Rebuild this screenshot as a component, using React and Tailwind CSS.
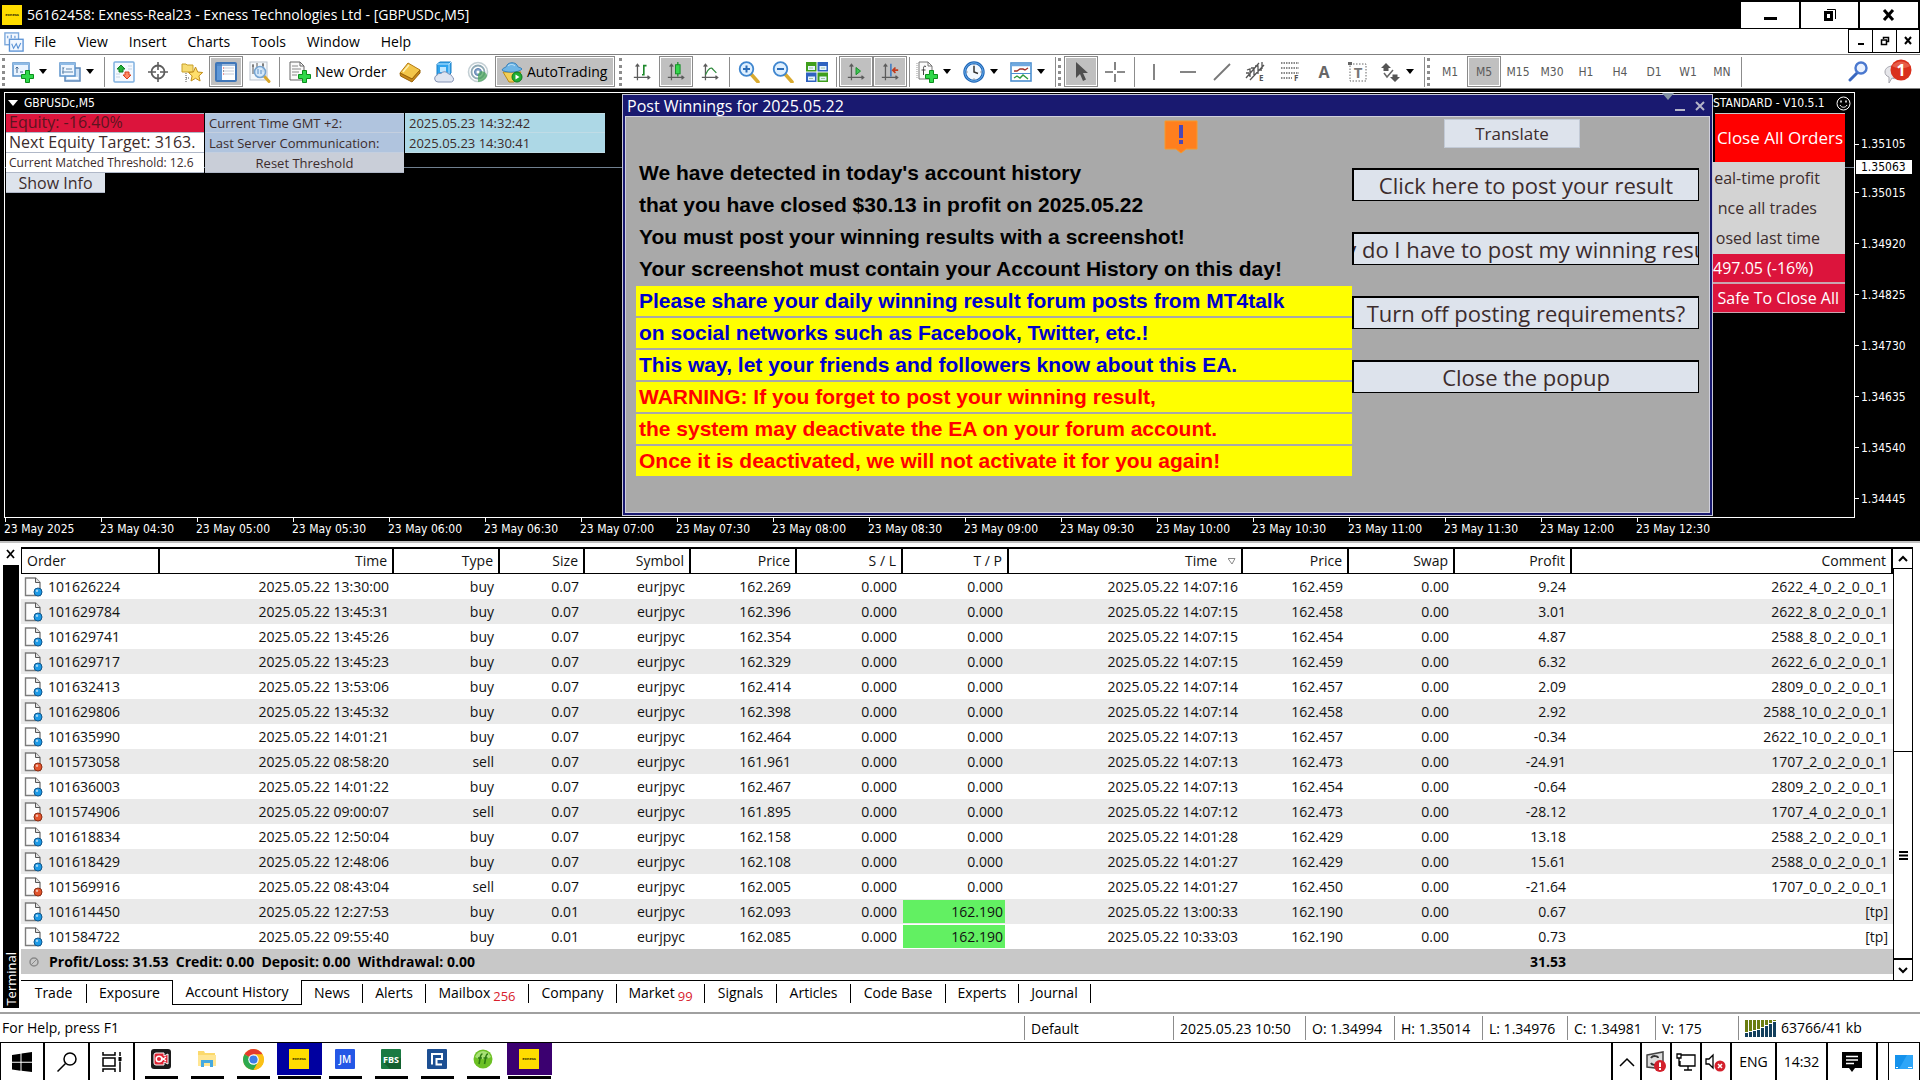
import React from 'react';

/* ---------- Data ---------- */

const MENUS = ['File', 'View', 'Insert', 'Charts', 'Tools', 'Window', 'Help'];

const TIMEFRAMES = ['M1', 'M5', 'M15', 'M30', 'H1', 'H4', 'D1', 'W1', 'MN'];

const TIMES = [
    '2025', '04:30', '05:00', '05:30', '06:00', '06:30', '07:00', '07:30', '08:00',
    '08:30', '09:00', '09:30', '10:00', '10:30', '11:00', '11:30', '12:00', '12:30',
];

const PRICES = ['1.35015', '1.34920', '1.34825', '1.34730', '1.34635', '1.34540', '1.34445'];

const COLUMNS = [
    { label: 'Order', width: 'w-[139px]' },
    { label: 'Time', width: 'w-[234px]' },
    { label: 'Type', width: 'w-[106px]' },
    { label: 'Size', width: 'w-[85px]' },
    { label: 'Symbol', width: 'w-[106px]' },
    { label: 'Price', width: 'w-[106px]' },
    { label: 'S / L', width: 'w-[106px]' },
    { label: 'T / P', width: 'w-[106px]' },
    { label: 'Time', width: 'w-[234px]', sorted: true },
    { label: 'Price', width: 'w-[106px]' },
    { label: 'Swap', width: 'w-[106px]' },
    { label: 'Profit', width: 'w-[117px]' },
    { label: 'Comment', width: '' },
];

// order, open time, type, size, open price, t/p, close time, close price, profit, comment
const ORDERS = [
    ['101626224', '13:30:00', 'buy', '0.07', '162.269', '0.000', '14:07:16', '162.459', '9.24', '2622_4_0_2_0_0_1'],
    ['101629784', '13:45:31', 'buy', '0.07', '162.396', '0.000', '14:07:15', '162.458', '3.01', '2622_8_0_2_0_0_1'],
    ['101629741', '13:45:26', 'buy', '0.07', '162.354', '0.000', '14:07:15', '162.454', '4.87', '2588_8_0_2_0_0_1'],
    ['101629717', '13:45:23', 'buy', '0.07', '162.329', '0.000', '14:07:15', '162.459', '6.32', '2622_6_0_2_0_0_1'],
    ['101632413', '13:53:06', 'buy', '0.07', '162.414', '0.000', '14:07:14', '162.457', '2.09', '2809_0_0_2_0_0_1'],
    ['101629806', '13:45:32', 'buy', '0.07', '162.398', '0.000', '14:07:14', '162.458', '2.92', '2588_10_0_2_0_0_1'],
    ['101635990', '14:01:21', 'buy', '0.07', '162.464', '0.000', '14:07:13', '162.457', '-0.34', '2622_10_0_2_0_0_1'],
    ['101573058', '08:58:20', 'sell', '0.07', '161.961', '0.000', '14:07:13', '162.473', '-24.91', '1707_2_0_2_0_0_1'],
    ['101636003', '14:01:22', 'buy', '0.07', '162.467', '0.000', '14:07:13', '162.454', '-0.64', '2809_2_0_2_0_0_1'],
    ['101574906', '09:00:07', 'sell', '0.07', '161.895', '0.000', '14:07:12', '162.473', '-28.12', '1707_4_0_2_0_0_1'],
    ['101618834', '12:50:04', 'buy', '0.07', '162.158', '0.000', '14:01:28', '162.429', '13.18', '2588_2_0_2_0_0_1'],
    ['101618429', '12:48:06', 'buy', '0.07', '162.108', '0.000', '14:01:27', '162.429', '15.61', '2588_0_0_2_0_0_1'],
    ['101569916', '08:43:04', 'sell', '0.07', '162.005', '0.000', '14:01:27', '162.450', '-21.64', '1707_0_0_2_0_0_1'],
    ['101614450', '12:27:53', 'buy', '0.01', '162.093', '162.190', '13:00:33', '162.190', '0.67', '[tp]'],
    ['101584722', '09:55:40', 'buy', '0.01', '162.085', '162.190', '10:33:03', '162.190', '0.73', '[tp]'],
];

const TABS = [
    { label: 'Trade', width: 'w-[66px]', sep: true },
    { label: 'Exposure', width: 'w-[85px]' },
    { label: 'Account History', width: 'w-[130px]', active: true },
    { label: 'News', width: 'w-[61px]', sep: true },
    { label: 'Alerts', width: 'w-[63px]', sep: true },
    { label: 'Mailbox', width: 'w-[103px]', sep: true, count: 256 },
    { label: 'Company', width: 'w-[88px]', sep: true },
    { label: 'Market', width: 'w-[88px]', sep: true, count: 99 },
    { label: 'Signals', width: 'w-[72px]', sep: true },
    { label: 'Articles', width: 'w-[74px]', sep: true },
    { label: 'Code Base', width: 'w-[95px]', sep: true },
    { label: 'Experts', width: 'w-[73px]', sep: true },
    { label: 'Journal', width: 'w-[72px]', sep: true },
];

const STATUS = [
    { text: 'Default', width: 'w-[149px]' },
    { text: '2025.05.23 10:50', width: 'w-[132px]' },
    { text: 'O: 1.34994', width: 'w-[89px]' },
    { text: 'H: 1.35014', width: 'w-[88px]' },
    { text: 'L: 1.34976', width: 'w-[85px]' },
    { text: 'C: 1.34981', width: 'w-[88px]' },
    { text: 'V: 175', width: 'w-[83px]' },
];

const POPUP_LINES = [
    ["We have detected in today's account history", 'text-black'],
    ['that you have closed $30.13 in profit on 2025.05.22', 'text-black'],
    ['You must post your winning results with a screenshot!', 'text-black'],
    ['Your screenshot must contain your Account History on this day!', 'text-black'],
    ['Please share your daily winning result forum posts from MT4talk', 'bg-[#ffff00] text-[#0000cd]'],
    ['on social networks such as Facebook, Twitter, etc.!', 'bg-[#ffff00] text-[#0000cd]'],
    ['This way, let your friends and followers know about this EA.', 'bg-[#ffff00] text-[#0000cd]'],
    ['WARNING: If you forget to post your winning result,', 'bg-[#ffff00] text-[#ff0000]'],
    ['the system may deactivate the EA on your forum account.', 'bg-[#ffff00] text-[#ff0000]'],
    ['Once it is deactivated, we will not activate it for you again!', 'bg-[#ffff00] text-[#ff0000]'],
];

const POPUP_BUTTONS = [
    'Click here to post your result',
    'Why do I have to post my winning results?',
    'Turn off posting requirements?',
    'Close the popup',
];

/* ---------- Icons ---------- */

function Icon({ children, size = 22 }) {
    return (
        <svg width={size} height={size} viewBox="0 0 22 22" fill="none" className="shrink-0">
            {children}
        </svg>
    );
}

const Plus = ({ x = 9, y = 9 }) => (
    <path
        transform={`translate(${x} ${y})`}
        d="M4.5.5h4v4h4v4h-4v4h-4v-4h-4v-4h4z"
        fill="#2fd84a"
        stroke="#0b8f1c"
    />
);

const Axes = () => (
    <path d="M6 3v17M2 17h17M4 5l2-2.500L8 5M17 15l2.500 2L17 19" stroke="#5c5c5c" strokeWidth="1.400" />
);

const NewChartIcon = () => (
    <Icon>
        <rect x="1" y="2" width="16" height="13" fill="#eaf4ff" stroke="#5b93cc" strokeWidth="1.500" />
        <path d="M1 3h16" stroke="#8fbbe6" strokeWidth="2" />
        <path d="M5 6v6M3.500 7.500 5 6l1.500 1.500M8 11h3" stroke="#44688f" />
        <Plus />
    </Icon>
);

const ProfilesIcon = () => (
    <Icon>
        <rect x="6" y="7" width="15" height="13" fill="#cfe2f6" stroke="#5b86b8" strokeWidth="1.500" />
        <path d="M8 17h11" stroke="#fff" strokeWidth="2" />
        <rect x="1" y="2" width="15" height="13" fill="#eef6ff" stroke="#5b93cc" strokeWidth="1.500" />
        <path d="M1 3h15" stroke="#8fbbe6" strokeWidth="2" />
        <path d="M4 6v7M3 11h11M7 8h6M4 8l1-1.500" stroke="#5f86ad" />
    </Icon>
);

const MarketWatchIcon = () => (
    <Icon>
        <rect x="1" y="1" width="20" height="20" rx="1" fill="#f4f9ff" stroke="#7fb0e0" strokeWidth="1.500" />
        <path d="M15 5h4M15 8h4M3 13h4M3 16h4" stroke="#c5d3e2" />
        <path d="m8 4 4 4h-2v3H6V8H4z" fill="#25b33a" stroke="#0f7d20" />
        <path d="m14 18 4-4h-2v-3h-4v3h-2z" fill="#ff8a66" stroke="#d8401c" />
    </Icon>
);

const CrosshairIcon = () => (
    <Icon>
        <circle cx="11" cy="11" r="6.500" stroke="#5d5d5d" strokeWidth="1.800" />
        <path d="M11 1v8M11 13v8M1 11h8M13 11h8" stroke="#5d5d5d" strokeWidth="1.600" />
    </Icon>
);

const NavigatorIcon = () => (
    <Icon>
        <path d="M1 3h4l1 1h6v7H1z" fill="#f7dc74" stroke="#c8a02a" />
        <path d="M5 12v9M5 17h4" stroke="#555" strokeDasharray="1 1" />
        <path d="m14.500 6 2.200 5 5 .5-3.800 3.400 1.200 5.100-4.600-2.700-4.500 2.700 1.100-5.100L7.500 11.500l4.900-.5z" fill="#ffdf6b" stroke="#c38f1c" />
    </Icon>
);

const TerminalIcon = () => (
    <Icon>
        <rect x="1" y="2" width="20" height="18" rx="1" fill="#fff" stroke="#3f76b8" strokeWidth="2" />
        <rect x="2" y="3" width="5" height="16" fill="#5f98d8" />
        <path d="M2 4h18" stroke="#3f76b8" />
        <path d="M9 7h10M9 10h10M9 13h10" stroke="#c4cbd6" />
        <path d="M8 7h1M8 13h1" stroke="#e03030" />
        <path d="M8 10h1" stroke="#333" />
    </Icon>
);

const TesterIcon = () => (
    <Icon>
        <rect x="1" y="1" width="17" height="18" fill="#f5f8fb" stroke="#b9c2cc" />
        <path d="M4 3v10M8 2v6M14 2v9M3 5h2M13 4h2" stroke="#555" />
        <path d="m15 15 5 5.500" stroke="#d8a62c" strokeWidth="3" strokeLinecap="round" />
        <circle cx="11" cy="11" r="5.500" fill="#cfe6fa" fillOpacity=".85" stroke="#77a5d2" strokeWidth="1.600" />
        <path d="M9 8v5M12 9v4" stroke="#5d8fc4" />
    </Icon>
);

const NewOrderIcon = () => (
    <Icon>
        <path d="M1 1h10l4 4v14H1z" fill="#fafafa" stroke="#666" />
        <path d="M11 1v4h4" stroke="#666" />
        <path d="M3 5h6M3 8h9M3 11h7M3 14h5" stroke="#8a8a8a" />
        <Plus />
    </Icon>
);

const BookIcon = () => (
    <Icon>
        <path d="M1 12 9 2l12 7-8 9z" fill="#f3c64a" stroke="#b47a12" />
        <path d="m1 12 .5 3L13 21l8-9V9l-8 9z" fill="#c8891a" stroke="#9a6408" />
        <path d="m4 11 6-7" stroke="#fff1b0" strokeWidth="1.500" />
    </Icon>
);

const CloudIcon = () => (
    <Icon>
        <path d="m4 3 3-2h11v11l-2 2H4z" fill="#2fa4ee" stroke="#1c7fc4" />
        <path d="M4 3h12v11M16 3l2-2" stroke="#bfe6ff" />
        <path d="M7 6h6v5H7z" fill="#bfe6ff" />
        <path d="M5 21a3.500 3.500 0 0 1-1-6.800A3.500 3.500 0 0 1 8 12.500a4.500 4.500 0 0 1 7.500.500 3.500 3.500 0 0 1 3.500 2.500A3 3 0 0 1 18.500 21z" fill="#dfe5f1" stroke="#8392b4" />
    </Icon>
);

const SignalIcon = () => (
    <Icon>
        <circle cx="11" cy="11" r="9.500" stroke="#c3cfd4" strokeWidth="1.600" />
        <circle cx="11" cy="11" r="6.500" stroke="#8fa9b4" strokeWidth="1.800" />
        <circle cx="11" cy="11" r="3.500" fill="#86a4c8" stroke="#5a7fb0" />
        <path d="M11 11c5-2 9 1 9 4-1 3-4 5.500-9 6z" fill="#4aa35a" fillOpacity=".75" />
        <circle cx="11" cy="11" r="1.500" fill="#fff" />
    </Icon>
);

const AutoTradingIcon = () => (
    <Icon>
        <path d="M2 11h18l-7 10H8z" fill="#f3cf55" stroke="#b88a18" />
        <path d="M1 9c1-3 5-2 5-5 2-3 8-3 10 0 0 3 4 2 5 4-3 4-17 4-20 1z" fill="#6fb6e6" stroke="#3881bb" />
        <path d="M7 5c2-2 5-2 7 0" stroke="#c9e8fa" />
        <circle cx="16" cy="16" r="5" fill="#1fae33" stroke="#0d7a1e" />
        <path d="m14.500 13.500 4 2.500-4 2.500z" fill="#fff" />
    </Icon>
);

const BarChartIcon = () => (
    <Icon size={20}>
        <Axes />
        <path d="M11 14h2V4h3M13 4v9" stroke="#1f8a2c" strokeWidth="1.800" />
    </Icon>
);

const CandleIcon = () => (
    <Icon size={20}>
        <Axes />
        <path d="M13 0v16" stroke="#1f8a2c" strokeWidth="1.400" />
        <rect x="10.500" y="3" width="5" height="10" fill="#35d64c" stroke="#128a24" />
    </Icon>
);

const LineChartIcon = () => (
    <Icon size={20}>
        <Axes />
        <path d="M6 14c3-7 7-9 8-6l4 4" stroke="#2f8a3c" strokeWidth="1.400" />
    </Icon>
);

function ZoomIcon({ plus }) {
    return (
        <Icon>
            <path d="m13 13 7 8" stroke="#d9aa2f" strokeWidth="3.500" strokeLinecap="round" />
            <circle cx="8.500" cy="8" r="6.800" fill="#dff0ff" stroke="#3f86cf" strokeWidth="1.800" />
            <path d={plus ? 'M5 8h7M8.500 4.500v7' : 'M5 8h7'} stroke="#2c6db8" strokeWidth="2" />
        </Icon>
    );
}

const TileIcon = () => (
    <Icon>
        <rect x="0" y="1" width="10.500" height="9.500" fill="#3f9e1c" />
        <rect x="11.500" y="1" width="10.500" height="9.500" fill="#2f62c0" />
        <rect x="0" y="11.500" width="10.500" height="9.500" fill="#2f62c0" />
        <rect x="11.500" y="11.500" width="10.500" height="9.500" fill="#3f9e1c" />
        <path d="M2 5h7v4H2zM13.500 5h7v4h-7zM2 15.500h7v4H2zM13.500 15.500h7v4h-7z" fill="#e6f3ff" />
        <path d="M3 7h4M15 7h4M3 17.500h4M15 17.500h4" stroke="#9fc3a0" />
    </Icon>
);

const AutoScrollIcon = () => (
    <Icon size={20}>
        <Axes />
        <path d="m11 6 5 4-5 4z" fill="#3fc452" stroke="#158a26" />
    </Icon>
);

const ShiftIcon = () => (
    <Icon size={20}>
        <Axes />
        <path d="M12 2v14" stroke="#2b6fc0" strokeWidth="1.500" />
        <path d="M20 9h-6M17 6l-3 3 3 3" stroke="#c23a1c" strokeWidth="1.800" />
    </Icon>
);

const IndicatorIcon = () => (
    <Icon>
        <path d="M3 1h9l4 4v13H3z" fill="#fafafa" stroke="#777" />
        <path d="M12 1v4h4" stroke="#777" />
        <path d="M1 2v16" stroke="#999" strokeDasharray="1 1" />
        <path d="M10 5.500c-2-1-2.500 0-2.500 2V14M5.500 9h4" stroke="#444" />
        <Plus />
    </Icon>
);

const ClockIcon = () => (
    <Icon>
        <circle cx="11" cy="11" r="9.200" fill="#f3f9ff" stroke="#1f66b8" strokeWidth="3" />
        <circle cx="11" cy="11" r="9.200" stroke="#69aeea" strokeWidth="1" />
        <path d="M11 5v6l4 1.500" stroke="#333" strokeWidth="1.500" />
        <path d="M11 3.500v1M11 17.500v1M3.500 11h1M17.500 11h1" stroke="#555" />
    </Icon>
);

const TemplateIcon = () => (
    <Icon>
        <rect x="1" y="2" width="20" height="18" fill="#fff" stroke="#4c8fd0" strokeWidth="1.600" />
        <path d="M1 4h20" stroke="#6fa9e0" strokeWidth="2.500" />
        <path d="M1 12.500h20" stroke="#4c8fd0" />
        <path d="M4 10h3l3-2h3l2 1 3-2" stroke="#a03028" strokeWidth="1.400" />
        <path d="m4 17 3-2 3 2 3-3 5 4" stroke="#2f9a3e" strokeWidth="1.400" />
    </Icon>
);

const CursorIcon = () => (
    <Icon>
        <path d="M6 1v16l4-4 3 7 3-1.500-3-6.500h5z" fill="#4f4f4f" />
    </Icon>
);

const CrossIcon = () => (
    <Icon>
        <path d="M11 1v8M11 13v8M1 11h8M13 11h8" stroke="#666" strokeWidth="1.600" />
    </Icon>
);

const VLineIcon = () => <Icon><path d="M11 3v16" stroke="#666" strokeWidth="1.600" /></Icon>;
const HLineIcon = () => <Icon><path d="M3 11h16" stroke="#666" strokeWidth="1.600" /></Icon>;
const TrendIcon = () => <Icon><path d="M3 19 19 3" stroke="#777" strokeWidth="1.800" /></Icon>;

const ChannelIcon = () => (
    <Icon>
        <path d="M1 17 14 2M5 19 19 4M2 9l3-1 0 8M6 7l3 0 0 8M10 5l3 0 0 8M17 1l0 7M1 12h3M13 9h4" stroke="#555" strokeWidth="1.300" />
        <text x="14" y="20" fontSize="8" fontWeight="700" fill="#555">E</text>
    </Icon>
);

const FiboIcon = () => (
    <Icon>
        <path d="M2 2h18M2 7h18M2 12h18M2 17h11" stroke="#666" strokeWidth="1.300" strokeDasharray="1.500 1" />
        <text x="15" y="20" fontSize="8" fontWeight="700" fill="#555">F</text>
    </Icon>
);

const TextIcon = () => (
    <Icon>
        <text x="11" y="17" fontSize="16" fontWeight="700" fill="#666" textAnchor="middle">A</text>
    </Icon>
);

const LabelIcon = () => (
    <Icon>
        <rect x="3" y="3" width="16" height="17" stroke="#666" strokeDasharray="1.500 1.500" />
        <path d="M1 1h4v3H1z" fill="#666" />
        <text x="11" y="17" fontSize="15" fontWeight="700" fill="#777" textAnchor="middle">T</text>
    </Icon>
);

const ArrowsIcon = () => (
    <Icon>
        <path d="M7 2 2 7l2.500 0v3h5V7H12zM16 21l5-5h-2.500v-2.500h-5V16H11z" fill="#555" />
        <path d="m5 12 3 4 6-7" stroke="#666" strokeWidth="1.500" />
    </Icon>
);

const MdiIcon = () => (
    <Icon size={20}>
        <rect x="1" y="1" width="15" height="13" fill="#f3f8ff" stroke="#7aa7db" strokeWidth="1.500" />
        <path d="M4 4v3M8 3v4M12 4v3" stroke="#7aa7db" strokeWidth="1.500" />
        <rect x="6" y="8" width="15" height="13" fill="#f3f8ff" stroke="#5d94d6" strokeWidth="1.500" />
        <path d="m8.500 13 2 5 3-5 2 5 3-6" stroke="#5d94d6" strokeWidth="1.200" />
    </Icon>
);

const ExnessTile = () => (
    <svg width="20" height="20" viewBox="0 0 20 20" className="shrink-0">
        <path d="M0 0h20v20H0z" fill="#ffdd00" />
        <text x="10" y="11" fontSize="4" fontWeight="700" textAnchor="middle" fill="#332b00">exness</text>
    </svg>
);

function DocIcon({ sell }) {
    return (
        <svg width="19" height="20" viewBox="0 0 19 20" fill="none" className="shrink-0">
            <path d="M1.500 1h10L16 5.500V18.500h-14.500z" fill="#fdfdfd" stroke="#7c7c7c" strokeWidth="1.400" />
            <path d="M11.500 1v4.500H16" fill="#e3e3e3" stroke="#555" />
            <circle cx="14" cy="15" r="4" fill={sell ? '#e2552d' : '#1d9ae6'} stroke={sell ? '#8d2c12' : '#0f568c'} />
            <circle cx="13" cy="13.700" r="1.200" fill="#fff" fillOpacity=".6" />
        </svg>
    );
}

/* ---------- Toolbar parts ---------- */

const Sep = () => <span className="w-px h-[30px] mx-[2px] bg-[#8c8c8c] shrink-0" />;

const Grip = () => (
    <span className="w-[6px] shrink-0 flex">
        <span className="w-[3px] h-[28px] border-l-[3px] border-dotted border-[#8c8c8c]" />
    </span>
);

function ToolButton({ label, active, children }) {
    return (
        <button
            aria-label={label}
            className={
                active
                    ? 'w-[34px] h-[31px] shrink-0 flex items-center justify-center bg-[#c0c0c0] border border-[#8a8a8a] outline outline-1 -outline-offset-2 outline-white'
                    : 'w-[34px] h-[31px] shrink-0 flex items-center justify-center'
            }
        >
            {children}
        </button>
    );
}

function DropButton({ label, children }) {
    return (
        <button aria-label={label} className="w-[47px] h-[31px] shrink-0 flex items-center pl-1">
            {children}
            <svg width="8" height="5" viewBox="0 0 8 5" className="ml-[5px]"><path d="M0 0h8L4 5z" fill="#000" /></svg>
        </button>
    );
}

function Toolbar() {
    return (
        <div className="h-[34px] shrink-0 flex items-center pl-[2px] bg-white border-b border-[#808080] overflow-hidden">
            <Grip />
            <DropButton label="New chart"><NewChartIcon /></DropButton>
            <DropButton label="Profiles"><ProfilesIcon /></DropButton>
            <Sep />
            <ToolButton label="Market watch"><MarketWatchIcon /></ToolButton>
            <ToolButton label="Data window"><CrosshairIcon /></ToolButton>
            <ToolButton label="Navigator"><NavigatorIcon /></ToolButton>
            <ToolButton label="Terminal" active><TerminalIcon /></ToolButton>
            <ToolButton label="Strategy tester"><TesterIcon /></ToolButton>
            <Sep />
            <button className="w-[111px] shrink-0 flex items-center gap-1 pl-[7px] text-[14px] whitespace-nowrap">
                <NewOrderIcon />
                New Order
            </button>
            <ToolButton label="MetaEditor"><BookIcon /></ToolButton>
            <ToolButton label="Hosting"><CloudIcon /></ToolButton>
            <ToolButton label="Signals"><SignalIcon /></ToolButton>
            <button className="w-[120px] h-[31px] mr-1 shrink-0 flex items-center gap-1 pl-[5px] text-[14px] whitespace-nowrap bg-[#c0c0c0] border border-[#8a8a8a] outline outline-1 -outline-offset-2 outline-white">
                <AutoTradingIcon />
                AutoTrading
            </button>
            <Grip />
            <ToolButton label="Bar chart"><BarChartIcon /></ToolButton>
            <ToolButton label="Candlesticks" active><CandleIcon /></ToolButton>
            <ToolButton label="Line chart"><LineChartIcon /></ToolButton>
            <Sep />
            <ToolButton label="Zoom in"><ZoomIcon plus /></ToolButton>
            <ToolButton label="Zoom out"><ZoomIcon /></ToolButton>
            <ToolButton label="Tile windows"><TileIcon /></ToolButton>
            <Sep />
            <ToolButton label="Auto scroll" active><AutoScrollIcon /></ToolButton>
            <ToolButton label="Chart shift" active><ShiftIcon /></ToolButton>
            <Sep />
            <DropButton label="Indicators"><IndicatorIcon /></DropButton>
            <DropButton label="Periods"><ClockIcon /></DropButton>
            <DropButton label="Templates"><TemplateIcon /></DropButton>
            <Sep />
            <Grip />
            <ToolButton label="Cursor" active><CursorIcon /></ToolButton>
            <ToolButton label="Crosshair"><CrossIcon /></ToolButton>
            <Sep />
            <ToolButton label="Vertical line"><VLineIcon /></ToolButton>
            <ToolButton label="Horizontal line"><HLineIcon /></ToolButton>
            <ToolButton label="Trendline"><TrendIcon /></ToolButton>
            <ToolButton label="Channel"><ChannelIcon /></ToolButton>
            <ToolButton label="Fibonacci"><FiboIcon /></ToolButton>
            <ToolButton label="Text"><TextIcon /></ToolButton>
            <ToolButton label="Text label"><LabelIcon /></ToolButton>
            <DropButton label="Arrows"><ArrowsIcon /></DropButton>
            <Sep />
            <Grip />
            {TIMEFRAMES.map((tf) => (
                <ToolButton key={tf} label={tf} active={tf === 'M5'}>
                    <span className="font-['DejaVu_Sans_Condensed','DejaVu_Sans',sans-serif] text-[12px] text-[#5a5a5a]">{tf}</span>
                </ToolButton>
            ))}
            <Sep />
            <div className="ml-auto flex items-center gap-3 pr-2">
                <button aria-label="Search">
                    <Icon>
                        <path d="m9 12-7 7" stroke="#3a68c0" strokeWidth="3" strokeLinecap="round" />
                        <circle cx="13" cy="7" r="5.500" fill="#eaf2ff" stroke="#4a78cf" strokeWidth="2.400" />
                    </Icon>
                </button>
                <button aria-label="Notifications">
                    <svg width="30" height="28" viewBox="0 0 30 28" fill="none">
                        <path d="M3 14c0-8 15-8 16 0s-7 7-9 6l-3 5 0-6c-3-1-4-3-4-5z" fill="#e6e6ea" stroke="#a5a5ad" />
                        <circle cx="19" cy="12" r="10.500" fill="#d9301c" />
                        <path d="M10 8c4-6 14-6 18 0-5 3-13 3-18 0z" fill="#f07a66" fillOpacity=".6" />
                        <text x="19" y="18" fontSize="16" fontWeight="700" fill="#fff" textAnchor="middle">1</text>
                    </svg>
                </button>
            </div>
        </div>
    );
}

/* ---------- Title and menu ---------- */

function TitleBar() {
    return (
        <header className="h-[29px] shrink-0 flex items-center bg-black text-white pl-[2px] pr-[2px]">
            <ExnessTile />
            <h1 className="ml-[5px] text-[14px] whitespace-nowrap">56162458: Exness-Real23 - Exness Technologies Ltd - [GBPUSDc,M5]</h1>
            <div className="ml-auto flex gap-[2px]">
                <button aria-label="Minimize" className="w-[58px] h-[26px] bg-white flex items-center justify-center">
                    <svg width="14" height="14"><path d="M1 9h13v3H1z" /></svg>
                </button>
                <button aria-label="Restore" className="w-[57px] h-[26px] bg-white flex items-center justify-center">
                    <svg width="14" height="14" fill="none"><path d="M2.500 4.500h6v7h-6z" stroke="#000" strokeWidth="3" /><path d="M4 1.500h8.500V11" stroke="#000" /></svg>
                </button>
                <button aria-label="Close" className="w-[58px] h-[26px] bg-white flex items-center justify-center">
                    <svg width="14" height="14"><path d="m2 2 9 10M11 2 2 12" stroke="#000" strokeWidth="3" /></svg>
                </button>
            </div>
        </header>
    );
}

function MenuBar() {
    return (
        <nav className="h-[26px] shrink-0 flex items-start bg-white border-b border-[#808080] pl-1">
            <span className="mt-[3px]"><MdiIcon /></span>
            <div className="flex items-center h-[24px] ml-[10px] gap-[21px] text-[14px]">
                {MENUS.map((m) => <button key={m}>{m}</button>)}
            </div>
            <div className="ml-auto flex">
                <button aria-label="Minimize chart" className="w-6 h-[24px] border border-black border-r-0 flex items-center justify-center">
                    <svg width="10" height="10"><path d="M2 7h6v2H2z" /></svg>
                </button>
                <button aria-label="Restore chart" className="w-6 h-[24px] border border-black border-r-0 flex items-center justify-center">
                    <svg width="10" height="10" fill="none"><path d="M3.500 3V1.500h5v4H7M1.500 4h5v4.500h-5z" stroke="#000" strokeWidth="1.500" /></svg>
                </button>
                <button aria-label="Close chart" className="w-6 h-[24px] border border-black flex items-center justify-center">
                    <svg width="10" height="10"><path d="m2 1 6 7M8 1 2 8" stroke="#000" strokeWidth="2" /></svg>
                </button>
            </div>
        </nav>
    );
}

/* ---------- Chart ---------- */

function EquityPanel() {
    return (
        <div className="relative w-[602px] pl-px text-[#3c2c2c] whitespace-nowrap">
            <div className="grid grid-cols-[198px_199px_200px] gap-x-px text-[13px] leading-[20px]">
                <div className="h-[20px] pl-[3px] leading-[16px] bg-[#dc143c] border-y border-[#b0b8c8] text-[16px] text-[#5c1420]">Equity: -16.40%</div>
                <div className="h-[20px] pl-1 leading-[19px] bg-[#b0c4de] border-y border-[#c4cfdf]">Current Time GMT +2:</div>
                <div className="h-[20px] pl-1 leading-[19px] bg-[#add8e6] border-y border-[#c0dce6]">2025.05.23 14:32:42</div>
                <div className="h-[20px] pl-[3px] leading-[18px] bg-white border-b border-[#b0b8c8] text-[16px]">Next Equity Target: 3163.</div>
                <div className="h-[20px] pl-1 bg-[#b0c4de] border-b border-[#c4cfdf]">Last Server Communication:</div>
                <div className="h-[20px] pl-1 bg-[#add8e6] border-b border-[#c0dce6]">2025.05.23 14:30:41</div>
                <div className="h-[20px] pl-[3px] bg-white border-b border-[#b0b8c8] text-[12px]">Current Matched Threshold: 12.6</div>
                <button className="h-[20px] bg-[#c9ced8] border-b border-[#b0b8c8]">Reset Threshold</button>
            </div>
            <button className="w-[99px] h-[20px] bg-[#dde3ec] border-b border-[#b0b8c8] text-[16px] leading-[18px]">Show Info</button>
        </div>
    );
}

function ClosePanel() {
    return (
        <div className="relative w-[141px] shrink-0 flex flex-col text-[17px] whitespace-nowrap text-[#3c2c2c]">
            <div className="h-[20px] flex items-center justify-between pr-[3px] text-white font-['DejaVu_Sans_Condensed','DejaVu_Sans',sans-serif] text-[12px]">
                STANDARD - V10.5.1
                <svg width="15" height="15" viewBox="0 0 15 15" fill="none" stroke="#fff">
                    <circle cx="7.500" cy="7.500" r="6.500" />
                    <path d="M4 9c1.500 3 5.500 3 7 0" />
                    <path d="M5 4.500v2M10 4.500v2" strokeWidth="1.500" />
                </svg>
            </div>
            <div className="w-[132px] pl-[2px]">
                <button className="w-full h-[49px] bg-[#ff0000] text-white border-t border-[#c8c8c8]">Close All Orders</button>
            </div>
            <div className="w-[132px] bg-[#d3d3d3] pt-px pb-px leading-[30px] text-right text-[16px]">
                <p className="pr-[25px]">eal-time profit</p>
                <p className="pr-[28px]">nce all trades</p>
                <p className="pr-[25px]">osed last time</p>
            </div>
            <div className="w-[132px] h-[30px] leading-[28px] pr-[32px] text-right text-[16px] bg-[#dc143c] text-white border-b-2 border-[#c9a5b0]">497.05 (-16%)</div>
            <button className="w-[132px] h-[29px] pr-[6px] text-right text-[16px] bg-[#dc143c] text-white border-b border-[#c9a5b0]">Safe To Close All</button>
        </div>
    );
}

function Popup() {
    return (
        <div className="absolute left-[617px] right-[141px] top-px bottom-px flex flex-col border border-[#c8c8d8] bg-[#191970] pt-px px-[2px] pb-[2px]">
            <div className="h-[20px] shrink-0 flex items-center pl-[2px] pr-[5px] text-white text-[16px]">
                <span className="leading-[20px]">Post Winnings for 2025.05.22</span>
                <button aria-label="Collapse popup" className="ml-auto mr-[10px]">
                    <svg width="10" height="10"><path d="M0 8h10v2H0z" fill="#b4b4c8" /></svg>
                </button>
                <button aria-label="Dismiss popup">
                    <svg width="10" height="10"><path d="m1 1 8 8M9 1 1 9" stroke="#b4b4c8" strokeWidth="2" /></svg>
                </button>
            </div>
            <div className="flex-1 flex bg-[#a9a9a9] border border-[#d0d0dc] pl-[10px] pr-[10px]">
                <div className="flex-1 min-w-0">
                    <div className="h-[41px] flex justify-end pt-[3px] pr-[154px]">
                        <svg width="34" height="34" viewBox="0 0 34 34">
                            <path d="M1 1h32v28H22l-5 4-5-4H1z" fill="#ff7f1e" stroke="#f79a2a" />
                            <path d="M15 5h4v13h-4zM15 20h4v4h-4z" fill="#4a48b8" />
                        </svg>
                    </div>
                    <div className="flex flex-col gap-[2px]">
                        {POPUP_LINES.map(([text, tone]) => (
                            <p
                                key={text}
                                className={`h-[30px] pl-[3px] font-['Liberation_Sans',Arial,sans-serif] font-bold text-[21px] leading-[30px] whitespace-nowrap ${tone}`}
                            >
                                {text}
                            </p>
                        ))}
                    </div>
                </div>
                <div className="w-[347px] shrink-0 flex flex-col pt-[2px] text-[#3c2c2c]">
                    <button className="ml-[92px] mb-5 w-[136px] h-[29px] bg-[#dde3ec] border border-[#c2cad6] text-[17px] leading-[26px]">Translate</button>
                    <div className="flex flex-col gap-[31px]">
                        {POPUP_BUTTONS.map((b) => (
                            <button
                                key={b}
                                className="h-[33px] flex items-center justify-center overflow-hidden whitespace-nowrap bg-[#dde3ec] border border-t-2 border-l-2 border-black text-[22px] leading-[30px]"
                            >
                                {b}
                            </button>
                        ))}
                    </div>
                </div>
            </div>
        </div>
    );
}

function PriceAxis() {
    return (
        <div className="relative w-[63px] shrink-0 pt-[29px] text-white">
            <p className="h-[46px] flex items-center gap-[2px]"><span className="w-1 h-px bg-white" />1.35105</p>
            {PRICES.map((p) => (
                <p key={p} className="h-[51px] flex items-center gap-[2px]"><span className="w-1 h-px bg-white" />{p}</p>
            ))}
            <span className="absolute left-px top-[68px] w-[56px] h-[14px] pl-[5px] leading-[14px] bg-white text-black">1.35063</span>
        </div>
    );
}

function Chart() {
    return (
        <section className="h-[454px] shrink-0 flex flex-col bg-black border-b-2 border-[#c0c0c0] pl-1 pt-[3px] pr-[2px] font-['DejaVu_Sans_Condensed','DejaVu_Sans',sans-serif] text-[12px]">
            <div className="flex-1 min-h-0 flex">
                <div className="relative flex-1 flex justify-between border border-white font-['Open_Sans','Noto_Sans',sans-serif]">
                    <span className="absolute left-0 right-0 top-[74px] h-px bg-[#708090]" />
                    <div>
                        <div className="h-[20px] flex items-center gap-[6px] pl-[3px] text-white font-['DejaVu_Sans_Condensed','DejaVu_Sans',sans-serif] text-[12px]">
                            <svg width="10" height="6"><path d="M0 0h10L5 6z" fill="#fff" /></svg>
                            GBPUSDc,M5
                        </div>
                        <EquityPanel />
                    </div>
                    <ClosePanel />
                    <Popup />
                    <svg width="12" height="7" className="absolute right-[180px] top-0"><path d="M0 0h12L6 7z" fill="#8494a4" /></svg>
                </div>
                <PriceAxis />
            </div>
            <div className="h-[23px] shrink-0 flex text-white overflow-hidden">
                {TIMES.map((t) => (
                    <div key={t} className="w-[96px] shrink-0">
                        <span className="block ml-px w-px h-[4px] bg-white" />
                        <p className="leading-[14px] whitespace-nowrap">23 May {t}</p>
                    </div>
                ))}
            </div>
        </section>
    );
}

/* ---------- Terminal ---------- */

function HistoryTable() {
    return (
        <table className="w-full table-fixed border-separate border-spacing-0 text-[14px] leading-[25px] text-right text-[#111]">
            <colgroup>
                {COLUMNS.map((c, i) => <col key={i} className={c.width} />)}
            </colgroup>
            <thead>
                <tr>
                    {COLUMNS.map((c, i) => (
                        <th
                            key={i}
                            scope="col"
                            className={`h-[27px] p-0 leading-[24px] font-normal border-t-2 border-b border-r-2 border-black ${i === 0 ? 'pl-[5px] text-left border-l' : 'pr-[5px]'}`}
                        >
                            {c.label}
                            {c.sorted && (
                                <svg width="8" height="7" viewBox="0 0 8 7" fill="none" className="inline-block ml-[11px] mb-[2px]">
                                    <path d="M0 .5h7L4 6z" stroke="#8a8a8a" />
                                </svg>
                            )}
                        </th>
                    ))}
                </tr>
            </thead>
            <tbody>
                {ORDERS.map(([id, opened, type, size, price, tp, closed, closePrice, profit, comment], i) => (
                    <tr key={id} className={i % 2 ? 'h-[25px] bg-[#eaeaea]' : 'h-[25px] bg-white'}>
                        <td className="p-0 pl-[3px]">
                            <span className="flex items-center gap-[5px] h-[25px]"><DocIcon sell={type === 'sell'} />{id}</span>
                        </td>
                        <td className="p-0 pr-[5px]">2025.05.22 {opened}</td>
                        <td className="p-0 pr-[6px]">{type}</td>
                        <td className="p-0 pr-[6px]">{size}</td>
                        <td className="p-0 pr-[6px]">eurjpyc</td>
                        <td className="p-0 pr-[6px]">{price}</td>
                        <td className="p-0 pr-[6px]">0.000</td>
                        <td className="p-0 pr-1">
                            <span className={tp === '0.000' ? 'block pr-[2px]' : 'block h-[23px] leading-[23px] pr-[2px] bg-[#62f062]'}>{tp}</span>
                        </td>
                        <td className="p-0 pr-[5px]">2025.05.22 {closed}</td>
                        <td className="p-0 pr-[6px]">{closePrice}</td>
                        <td className="p-0 pr-[6px]">0.00</td>
                        <td className="p-0 pr-[6px]">{profit}</td>
                        <td className="p-0 pr-[5px]">{comment}</td>
                    </tr>
                ))}
                <tr className="h-[25px] bg-[#c8c8c8] font-bold text-black">
                    <td colSpan={11} className="p-0 pl-[8px]">
                        <span className="flex items-center h-[25px] gap-[10px] whitespace-pre">
                            <svg width="10" height="10" viewBox="0 0 10 10" fill="none" stroke="#8a8a8a"><circle cx="5" cy="5" r="4" strokeWidth="1.500" /><path d="m2 8 6-6" /></svg>
                            {'Profit/Loss: 31.53  Credit: 0.00  Deposit: 0.00  Withdrawal: 0.00'}
                        </span>
                    </td>
                    <td className="p-0 pr-[6px]">31.53</td>
                    <td />
                </tr>
            </tbody>
        </table>
    );
}

function ScrollBar() {
    return (
        <div className="w-5 shrink-0 flex flex-col border-t-2 border-r border-black">
            <button aria-label="Scroll up" className="h-[20px] flex items-center justify-center border-b border-black">
                <svg width="10" height="7" fill="none"><path d="m1 6 4-4 4 4" stroke="#000" strokeWidth="2" /></svg>
            </button>
            <div className="h-[182px] border-l border-black" />
            <div className="flex-1 border-y border-l border-black flex items-center justify-center">
                <svg width="9" height="9"><path d="M0 0h9v2H0zM0 3.500h9v2H0zM0 7h9v2H0z" /></svg>
            </div>
            <button aria-label="Scroll down" className="h-[21px] flex items-center justify-center border-t border-l border-black">
                <svg width="10" height="7" fill="none"><path d="m1 1 4 4 4-4" stroke="#000" strokeWidth="2" /></svg>
            </button>
        </div>
    );
}

function Tabs() {
    return (
        <div className="h-[32px] flex items-start text-[14px] leading-[20px]">
            {TABS.map((t) => (
                <button
                    key={t.label}
                    className={`${t.width} h-[25px] shrink-0 flex items-center whitespace-nowrap border-black ${t.active ? 'border-x border-b' : 'border-t'}`}
                >
                    <span className="flex-1 text-center">
                        {t.label}
                        {t.count && <sub className="ml-[3px] text-[13px] text-[#d8202c] leading-none">{t.count}</sub>}
                    </span>
                    {t.sep && <span className="w-px h-[19px] bg-black" />}
                </button>
            ))}
            <span className="flex-1 border-t border-black mr-[7px]" />
        </div>
    );
}

function Terminal() {
    return (
        <section className="flex bg-white border-b-2 border-[#a0a0a0]">
            <div className="w-[21px] shrink-0 flex flex-col pl-[3px] pr-[2px] pb-1">
                <button aria-label="Close terminal" className="h-[22px] flex items-center justify-center">
                    <svg width="10" height="10"><path d="m1 1 7 8M8 1 1 9" stroke="#000" strokeWidth="1.800" /></svg>
                </button>
                <div className="flex-1 bg-black text-white flex items-end justify-center pb-[2px]">
                    <span className="[writing-mode:vertical-rl] rotate-180 text-[13px] leading-[16px]">Terminal</span>
                </div>
            </div>
            <div className="flex-1 min-w-0 flex flex-col pt-1">
                <div className="flex pr-[7px]">
                    <div className="flex-1 min-w-0 pb-[6px]"><HistoryTable /></div>
                    <ScrollBar />
                </div>
                <Tabs />
            </div>
        </section>
    );
}

/* ---------- Status bar and taskbar ---------- */

const TRAFFIC = [4, 5, 6, 7, 9, 11, 13, 15];

function StatusBar() {
    return (
        <footer className="h-[29px] shrink-0 flex items-center bg-white border-b border-black text-[14px] leading-[26px] whitespace-nowrap">
            <span className="flex-1 pl-[2px]">For Help, press F1</span>
            {STATUS.map((s) => (
                <span key={s.text} className={`${s.width} shrink-0 h-[24px] pl-[6px] border-l border-[#8c8c8c]`}>{s.text}</span>
            ))}
            <span className="w-[182px] shrink-0 h-[24px] flex items-center gap-[5px] pl-[6px] border-l border-[#8c8c8c]">
                <svg width="31" height="17">
                    {TRAFFIC.map((h, i) => (
                        <g key={i}>
                            <rect x={i * 4} y="0" width="3" height={16 - h} fill="#6b7d10" />
                            <rect x={i * 4} y={17 - h} width="3" height={h} fill="#123f5c" />
                        </g>
                    ))}
                </svg>
                63766/41 kb
            </span>
        </footer>
    );
}

const APPS = [
    {
        name: 'Recorder',
        icon: (
            <svg width="20" height="20" viewBox="0 0 20 20" fill="none">
                <rect width="20" height="20" rx="3" fill="#1b1b1b" />
                <path d="M5 4h8v3l4-2v10l-4-2v3H5a2 2 0 0 1-2-2V6a2 2 0 0 1 2-2z" fill="#e02434" stroke="#fff" />
                <circle cx="8" cy="10" r="2.800" stroke="#fff" strokeWidth="1.500" />
                <path d="m10 8 5 4M10 12l5-4" stroke="#fff" strokeWidth="1.300" />
            </svg>
        ),
    },
    {
        name: 'Explorer',
        icon: (
            <svg width="20" height="20" viewBox="0 0 20 20" fill="none">
                <path d="M1 2h6l1 2h10v13H1z" fill="#fbd96c" />
                <path d="M1 6h18v11H1z" fill="#ffe694" />
                <path d="M4 18v-7h12v7h-3v-4H7v4z" fill="#45a9e0" />
            </svg>
        ),
    },
    {
        name: 'Chrome',
        icon: (
            <svg width="21" height="21" viewBox="0 0 20 20">
                <circle cx="10" cy="10" r="10" fill="#fbc116" />
                <path d="M10 10 1.340 5A10 10 0 0 1 18.660 5z" fill="#e33b2e" />
                <path d="M10 10 1.340 5A10 10 0 0 0 10 20l4-7z" fill="#2da94f" />
                <path d="M10 5h8.660A10 10 0 0 1 10 20l4.300-7.500z" fill="#fbc116" />
                <circle cx="10" cy="10" r="5" fill="#fff" />
                <circle cx="10" cy="10" r="3.900" fill="#3f7ee8" />
            </svg>
        ),
    },
    { name: 'Exness', icon: <ExnessTile />, tone: 'bg-[#0000a0]' },
    {
        name: 'JM',
        icon: (
            <svg width="20" height="20" viewBox="0 0 20 20">
                <rect width="20" height="20" rx="1" fill="#2457e6" />
                <text x="10" y="14" fontSize="10" fontWeight="600" textAnchor="middle" fill="#fff">JM</text>
            </svg>
        ),
    },
    {
        name: 'FBS',
        icon: (
            <svg width="20" height="20" viewBox="0 0 20 20">
                <rect width="20" height="20" rx="1" fill="#1a7a43" />
                <path d="M3 14 9 20h11V9z" fill="#12602f" />
                <text x="10" y="14" fontSize="9" fontWeight="700" textAnchor="middle" fill="#fff">FBS</text>
            </svg>
        ),
    },
    {
        name: 'Platform',
        icon: (
            <svg width="20" height="20" viewBox="0 0 20 20" fill="none">
                <rect width="20" height="20" rx="1" fill="#1c4f93" />
                <path d="M5 15.500V5h10v5H9.500v5.500H15" stroke="#fff" strokeWidth="2" />
            </svg>
        ),
    },
    {
        name: 'Forex',
        icon: (
            <svg width="20" height="20" viewBox="0 0 20 20" fill="none">
                <circle cx="10" cy="10" r="9.500" fill="#6cc024" />
                <path d="M2 8c3-8 13-8 16 0-5 3-11 3-16 0z" fill="#b6e88a" fillOpacity=".8" />
                <path d="M9.500 5c-3 0-2 5-3.500 10M15 5c-3 0-2 5-3.500 10M5 9h4M10.500 9h4" stroke="#2c7a10" strokeWidth="1.600" />
            </svg>
        ),
    },
    { name: 'Exness 2', icon: <ExnessTile />, tone: 'bg-[#3b0070]' },
];

function Taskbar() {
    const cell = 'h-full shrink-0 flex items-center justify-center border-r-2 border-black';
    return (
        <div className="h-[37px] shrink-0 flex bg-white text-[14px]">
            <button aria-label="Start" className={`${cell} w-[45px] border-l`}>
                <svg width="20" height="20"><path d="M0 3l8.500-1.300v8H0zM9.500 1.500 20 0v9.700H9.500zM0 10.700h8.500v8L0 17.400zM9.500 10.700H20V20L9.500 18.700z" /></svg>
            </button>
            <button aria-label="Search" className={`${cell} w-[45px]`}>
                <svg width="20" height="20" fill="none" stroke="#000" strokeWidth="1.500"><circle cx="13" cy="7" r="6" /><path d="m8.500 11.500-8 8" /></svg>
            </button>
            <button aria-label="Task view" className={`${cell} w-[45px]`}>
                <svg width="20" height="20" fill="none" stroke="#000" strokeWidth="1.500"><path d="M1 0v3h12V0M1 20v-3h12v3M1 6h12v8H1zM18 0v4M18 9.500V20" /><path d="M18 5v4" strokeWidth="3" /></svg>
            </button>
            <div className="flex ml-[3px]">
                {APPS.map((a) => (
                    <button key={a.name} aria-label={a.name} className="w-[46px] h-full flex flex-col items-center">
                        <span className={`${a.tone ? `w-[45px] ${a.tone}` : 'w-[33px]'} h-[32px] flex items-center justify-center`}>{a.icon}</span>
                        <span className={a.tone ? 'w-[43px] h-[3px] mt-px bg-black' : 'w-[33px] h-[3px] mt-px bg-black'} />
                    </button>
                ))}
            </div>
            <div className="ml-auto flex">
                <button aria-label="Hidden icons" className={`${cell} w-[31px] border-l-2`}>
                    <svg width="16" height="10" fill="none"><path d="m1 9 7-7 7 7" stroke="#000" strokeWidth="1.500" /></svg>
                </button>
                <button aria-label="Update alert" className={`${cell} w-[30px]`}>
                    <svg width="22" height="22" fill="none">
                        <path d="m2 4 16-3v17L2 16z" fill="#ddd" stroke="#444" strokeWidth="1.500" />
                        <path d="M6 7c2-3 7-2 7 0M13 12c-2 3-6 2-7 0" stroke="#333" strokeWidth="2" />
                        <circle cx="15" cy="15" r="6" fill="#d3202c" />
                        <path d="M14 11.500h2v4.500h-2zM14 17h2v2h-2z" fill="#fff" />
                    </svg>
                </button>
                <button aria-label="Network" className={`${cell} w-[30px]`}>
                    <svg width="20" height="18" fill="none" stroke="#000" strokeWidth="1.300"><path d="M5 2h14v11H4V8M8 17h8M12 13v4M1 1h4v4H1zM3 5v8" /></svg>
                </button>
                <button aria-label="Volume" className={`${cell} w-[30px]`}>
                    <svg width="22" height="20" fill="none">
                        <path d="M1 7h3l4-4v13l-4-4H1z" stroke="#000" strokeWidth="1.300" />
                        <circle cx="15" cy="14" r="5.500" fill="#d3202c" />
                        <path d="m13 12 4 4M17 12l-4 4" stroke="#fff" strokeWidth="1.500" />
                    </svg>
                </button>
                <button className={`${cell} w-[45px]`}>ENG</button>
                <button className={`${cell} w-[51px]`}>14:32</button>
                <button aria-label="Notifications" className={`${cell} w-[50px]`}>
                    <svg width="20" height="20"><path d="M0 0h20v16h-7l-3 4-3-4H0z" /><path d="M4 4.500h12M4 8h12M4 11.500h8" stroke="#fff" strokeWidth="1.500" /></svg>
                </button>
                <button aria-label="Show desktop" className="w-[32px] ml-[10px] flex items-center justify-center border-x border-black">
                    <svg width="18" height="14"><path d="M0 0h18v14H0z" fill="#1592ec" /><path d="M12 0h6v14H4z" fill="#2fa6f8" /><path d="M1 12.500h2M13 12.500h4" stroke="#fff" /></svg>
                </button>
            </div>
        </div>
    );
}

export default function App() {
    return (
        <div className="w-full min-h-screen flex flex-col overflow-hidden bg-white text-black font-['Open_Sans','Noto_Sans',sans-serif]">
            <TitleBar />
            <MenuBar />
            <Toolbar />
            <Chart />
            <Terminal />
            <StatusBar />
            <Taskbar />
        </div>
    );
}
